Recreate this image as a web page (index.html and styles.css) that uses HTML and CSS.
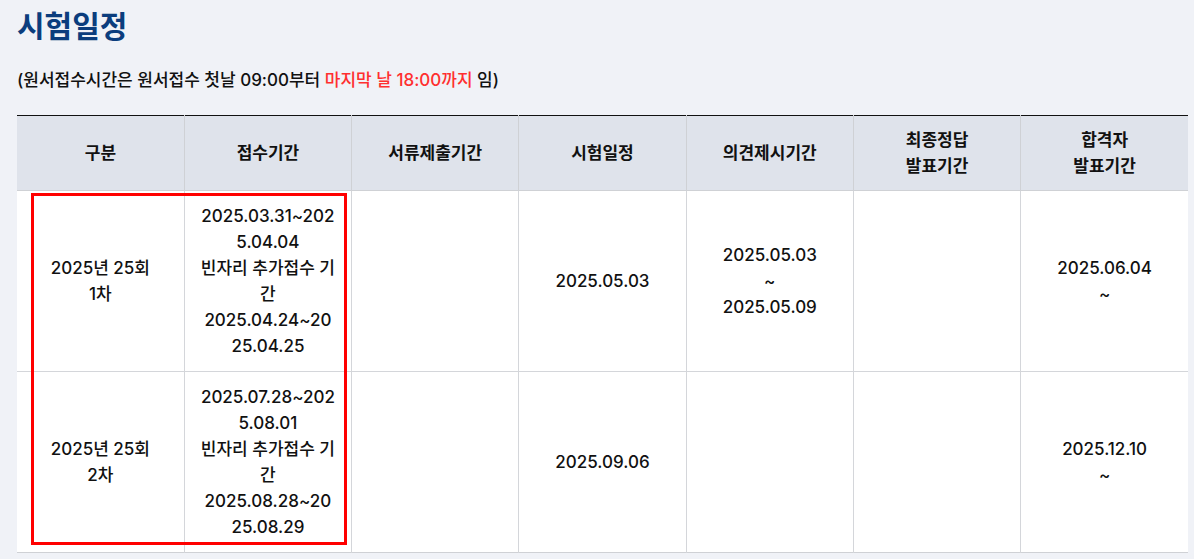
FILE: index.html
```html
<!DOCTYPE html>
<html lang="ko">
<head>
<meta charset="utf-8">
<title>시험일정</title>
<link rel="stylesheet" href="styles.css">
</head>
<body>
<div class="page">
  <h2 class="title">시험일정</h2>
  <p class="note">(원서접수시간은 원서접수 첫날 09:00부터 <span class="red">마지막 날 18:00까지</span> 임)</p>
  <div class="table-wrap">
    <table class="sched">
      <thead>
        <tr>
          <th>구분</th>
          <th>접수기간</th>
          <th>서류제출기간</th>
          <th>시험일정</th>
          <th>의견제시기간</th>
          <th>최종정답<br>발표기간</th>
          <th>합격자<br>발표기간</th>
        </tr>
      </thead>
      <tbody>
        <tr>
          <td>2025년 25회<br>1차</td>
          <td>2025.03.31~2025.04.04<br>빈자리 추가접수 기간<br>2025.04.24~2025.04.25</td>
          <td></td>
          <td>2025.05.03</td>
          <td>2025.05.03<br>~<br>2025.05.09</td>
          <td></td>
          <td>2025.06.04<br>~</td>
        </tr>
        <tr>
          <td>2025년 25회<br>2차</td>
          <td>2025.07.28~2025.08.01<br>빈자리 추가접수 기간<br>2025.08.28~2025.08.29</td>
          <td></td>
          <td>2025.09.06</td>
          <td></td>
          <td></td>
          <td>2025.12.10<br>~</td>
        </tr>
      </tbody>
    </table>
    <div class="highlight"></div>
  </div>
</div>
</body>
</html>
```

FILE: styles.css
```css
html, body {
  margin: 0;
  padding: 0;
  background: #f0f2f7;
}
body {
  font-family: Inter, "Noto Sans CJK KR", sans-serif;
  color: #111;
}
.page {
  padding: 6px 6px 0 17px;
}
.title {
  margin: 0;
  font-size: 30px;
  line-height: 40px;
  font-weight: 700;
  color: #0b3d7d;
}
.note {
  margin: 21px 0 0 0;
  font-size: 17px;
  line-height: 26px;
  font-weight: 500;
  color: #111;
}
.red {
  color: #ff2f2f;
}
.table-wrap {
  position: relative;
  margin-top: 22px;
}
.sched {
  width: 1171px;
  border-collapse: collapse;
  table-layout: fixed;
  border-top: 1px solid #111;
  border-bottom: 1px solid #cfd1d5;
  font-size: 17px;
  line-height: 26px;
}
.sched th {
  background: #dfe3eb;
  font-weight: 700;
  padding: 11px 15.5px;
  text-align: center;
  border-left: 1px solid #cfd1d5;
  border-bottom: 1px solid #cfd1d5;
  color: #111;
}
.sched td {
  background: #fff;
  padding: 12px 15.5px;
  text-align: center;
  vertical-align: middle;
  word-break: break-all;
  border-left: 1px solid #d4d6da;
  border-top: 1px solid #d4d6da;
  font-weight: 500;
}
.sched th:first-child,
.sched td:first-child {
  border-left: none;
}
.highlight {
  position: absolute;
  left: 14px;
  top: 78px;
  width: 310px;
  height: 346px;
  border: 3px solid #ff0000;
  pointer-events: none;
}
```
